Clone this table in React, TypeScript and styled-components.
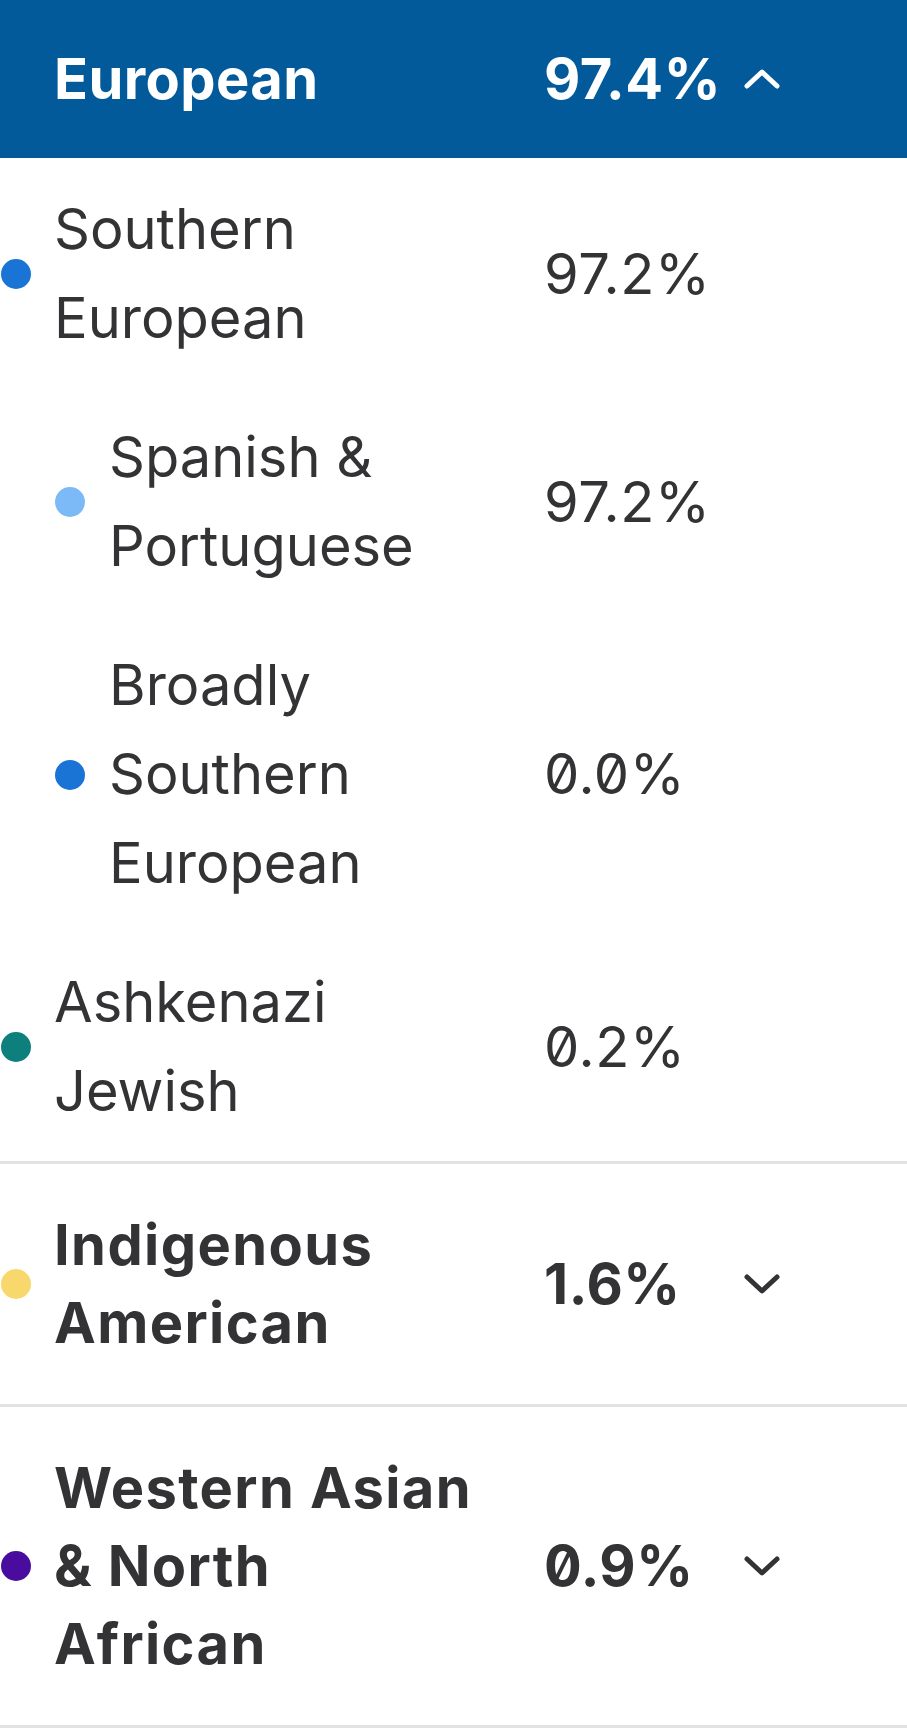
import React from 'react'
import styled, { createGlobalStyle } from 'styled-components'

const GlobalStyle = createGlobalStyle`
  html, body {
    margin: 0;
    padding: 0;
    background: #ffffff;
  }
  body {
    font-family: Inter, "Liberation Sans", Arial, sans-serif;
    color: #333335;
  }
`

const Panel = styled.div`
  width: 907px;
  background: #ffffff;
`

const Header = styled.div`
  height: 158px;
  background-color: #035a9a;
  color: #ffffff;
  display: grid;
  grid-template-columns: 54px 490px 200px 36px;
  align-items: center;
  font-size: 56px;
  font-weight: 700;
  letter-spacing: 0.4px;
`

const List = styled.div`
  padding-top: 2px;
`

const Row = styled.div<{ $bold?: boolean; $divider?: boolean }>`
  display: grid;
  grid-template-columns: 54px 490px 200px 36px;
  align-items: center;
  padding: ${(p) => (p.$bold ? '42px 0' : '25px 0')};
  border-bottom: ${(p) => (p.$divider ? '3px solid #e3e3e3' : 'none')};
  font-size: 56px;
  font-weight: ${(p) => (p.$bold ? 700 : 400)};
  letter-spacing: ${(p) => (p.$bold ? '1.4px' : '0')};
  line-height: ${(p) => (p.$bold ? '78px' : '89px')};
`

const Label = styled.div<{ $indent?: boolean }>`
  display: flex;
  align-items: center;
  grid-column: ${(p) => (p.$indent ? '1 / 3' : '2 / 3')};
  padding-left: ${(p) => (p.$indent ? '55px' : '0')};
  gap: 24px;
`

const DotCell = styled.div`
  display: flex;
  align-items: center;
  padding-left: 1px;
`

const Dot = styled.span<{ $color: string }>`
  display: block;
  flex: none;
  width: 30px;
  height: 30px;
  border-radius: 50%;
  background: ${(p) => p.$color};
`

const Name = styled.div`
  white-space: nowrap;
`

const Percent = styled.div`
  font-feature-settings: 'zero' 1;
  white-space: nowrap;
  letter-spacing: 0.6px;
`

const Chevron = styled.svg`
  display: block;
  width: 36px;
  height: 20px;
`

const HeaderTitle = styled.div`
  grid-column: 2 / 3;
  line-height: 68px;
`

type Item = {
  lines: string[]
  value: string
  color: string
  sub?: boolean
}

const european: Item[] = [
  { lines: ['Southern', 'European'], value: '97.2%', color: '#1a74d6' },
  { lines: ['Spanish &', 'Portuguese'], value: '97.2%', color: '#7bbaf7', sub: true },
  { lines: ['Broadly', 'Southern', 'European'], value: '0.0%', color: '#1a74d6', sub: true },
  { lines: ['Ashkenazi', 'Jewish'], value: '0.2%', color: '#0d7f7d' },
]

const others: Item[] = [
  { lines: ['Indigenous', 'American'], value: '1.6%', color: '#f8d76c' },
  { lines: ['Western Asian', '& North', 'African'], value: '0.9%', color: '#4a0c9e' },
]

const Arrow = ({ up, color }: { up?: boolean; color: string }) => (
  <Chevron viewBox="0 0 36 20">
    <path
      d={up ? 'M3 17 L18 3 L33 17' : 'M3 3 L18 17 L33 3'}
      fill="none"
      stroke={color}
      strokeWidth="5"
      strokeLinecap="round"
      strokeLinejoin="round"
    />
  </Chevron>
)

const Lines = ({ lines }: { lines: string[] }) => (
  <Name>
    {lines.map((l, i) => (
      <React.Fragment key={i}>
        {i > 0 && <br />}
        {l}
      </React.Fragment>
    ))}
  </Name>
)

const App = () => {
  return (
    <Panel>
      <GlobalStyle />
      <Header>
        <HeaderTitle>European</HeaderTitle>
        <Percent>97.4%</Percent>
        <Arrow up color="#ffffff" />
      </Header>

      <List>
        {european.map((item, i) => (
          <Row key={item.value + i} $divider={i === european.length - 1}>
            {item.sub ? (
              <Label $indent>
                <Dot $color={item.color} />
                <Lines lines={item.lines} />
              </Label>
            ) : (
              <>
                <DotCell>
                  <Dot $color={item.color} />
                </DotCell>
                <Lines lines={item.lines} />
              </>
            )}
            <Percent>{item.value}</Percent>
            <div />
          </Row>
        ))}

        {others.map((item) => (
          <Row key={item.value} $bold $divider>
            <DotCell>
              <Dot $color={item.color} />
            </DotCell>
            <Lines lines={item.lines} />
            <Percent>{item.value}</Percent>
            <Arrow color="#333335" />
          </Row>
        ))}
      </List>
    </Panel>
  )
}

export default App
